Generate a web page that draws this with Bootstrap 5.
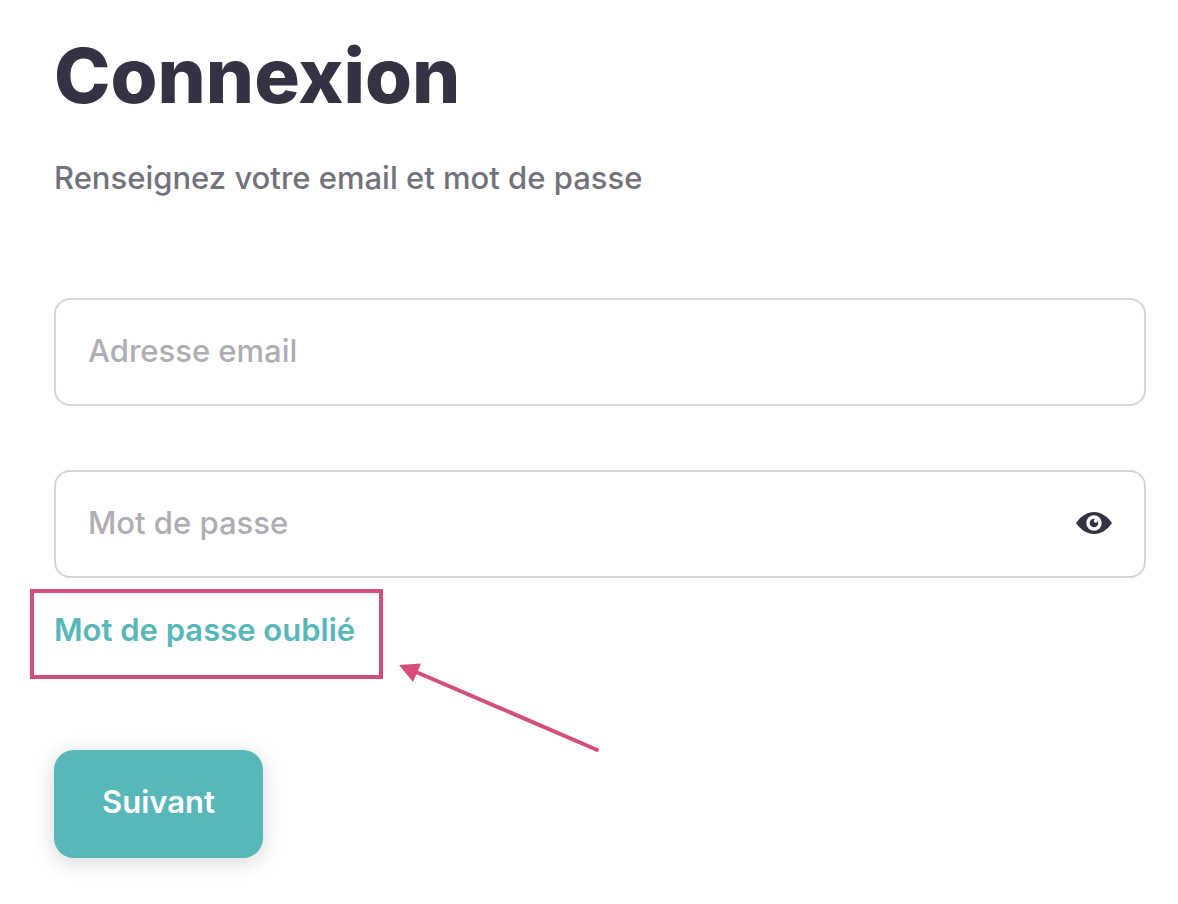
<!DOCTYPE html>
<html lang="fr">
<head>
<meta charset="utf-8">
<meta name="viewport" content="width=device-width, initial-scale=1">
<title>Connexion</title>
<link href="https://cdn.jsdelivr.net/npm/bootstrap@5.3.0/dist/css/bootstrap.min.css" rel="stylesheet">
<style>
  body { font-family: "Inter", sans-serif; font-size: 31px; line-height: 40px; font-weight: 500; color: #353343; background: #fff; }
  .login { padding: 31px 32px 40px 54px; }
  .login-title { font-size: 76px; line-height: 88px; font-weight: 800; color: #353343; margin-bottom: 39px; }
  .login-intro { color: #73727b; margin-bottom: 100px; }
  .login-fields { gap: 64px; }
  .field { height: 108px; padding: 0 32px 3px; border: 2px solid #d6d6d7; border-radius: 16px; font-size: 31px; font-weight: 500; color: #353343; }
  .field::placeholder { color: #aeadb4; opacity: 1; }
  .field-secret { padding-right: 88px; }
  .eye { right: 34px; padding: 0 0 2px; line-height: 0; color: #353343; }
  .forgot { margin: 11px 0 71px -24px; }
  .forgot-box { border: 4px solid #d54d7b; padding: 17px 24px 25px 20px; }
  .forgot-link { color: #57b7b9; font-weight: 600; }
  .pointer { margin: 74px 0 -74px 16px; }
  .btn-next { height: 108px; padding: 0 48px 4px; border: 0; border-radius: 20px; font-size: 31px; font-weight: 600; box-shadow: 0 4px 20px rgba(53,51,67,.2); }
  .btn-next, .btn-next:hover { color: #fff; background: #57b7b9; }
</style>
</head>
<body>
<main class="login">
  <h1 class="login-title">Connexion</h1>
  <p class="login-intro">Renseignez votre email et mot de passe</p>
  <form>
    <div class="login-fields d-flex flex-column">
      <input class="form-control field" type="email" placeholder="Adresse email" aria-label="Adresse email">
      <div class="position-relative">
        <input class="form-control field field-secret" type="password" placeholder="Mot de passe" aria-label="Mot de passe">
        <button class="eye btn border-0 position-absolute top-50 translate-middle-y" type="button" aria-label="Afficher le mot de passe">
          <svg width="36" height="22" viewBox="0 0 36 22" aria-hidden="true">
            <path fill="currentColor" d="M0 11C5 4 11 0 18 0s13 4 18 11c-5 7-11 11-18 11S5 18 0 11Z"/>
            <circle cx="18" cy="11" r="7.700" fill="#fff"/>
            <circle cx="18" cy="11" r="4.300" fill="currentColor"/>
            <circle cx="19.700" cy="8.800" r="1.900" fill="#fff"/>
          </svg>
        </button>
      </div>
    </div>
    <div class="forgot d-flex align-items-start">
      <div class="forgot-box"><a class="forgot-link d-block text-nowrap text-decoration-none" href="#">Mot de passe oublié</a></div>
      <svg class="pointer flex-shrink-0" width="202" height="90" viewBox="0 0 202 90" aria-hidden="true">
        <path d="M16 8.500 199.500 87.500" stroke="#d54d7b" stroke-width="4" fill="none"/>
        <path d="M0 2 22 .5 14 19Z" fill="#d54d7b"/>
      </svg>
    </div>
    <button class="btn btn-next" type="submit">Suivant</button>
  </form>
</main>
<script src="https://cdn.jsdelivr.net/npm/bootstrap@5.3.0/dist/js/bootstrap.bundle.min.js"></script>
</body>
</html>
